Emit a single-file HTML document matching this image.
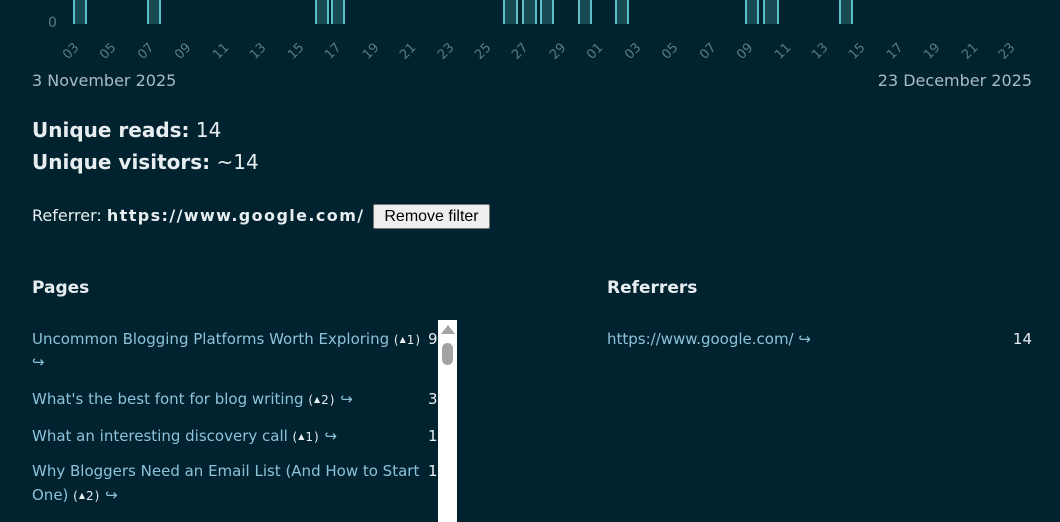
<!DOCTYPE html>
<html><head><meta charset="utf-8"><style>
body{margin:0;width:1060px;height:522px;overflow:hidden;background:#01222f;font-family:"DejaVu Sans","Liberation Sans",sans-serif;color:#e8eef0;position:relative}
.a{position:absolute;white-space:nowrap}
.bar{position:absolute;top:-2px;height:26px;background:#1a4b55;border-left:2px solid #5cc0c6;border-right:2px solid #5cc0c6;box-sizing:border-box}
.xl{position:absolute;top:44px;font-size:13px;color:#5d7a84;transform:rotate(-45deg);transform-origin:center}
.lk{color:#8cc3da}
.s{font-size:12px;color:#e8eef0;letter-spacing:1px}
.s i{font-style:normal;font-size:8px;vertical-align:2px}
.f{font-size:15px}
</style></head><body>
<div class="a" style="left:48px;top:15px;font-size:14px;color:#5d7a84">0</div>
<div class="bar" style="left:73px;width:14px"></div>
<div class="bar" style="left:147px;width:14px"></div>
<div class="bar" style="left:315px;width:14px"></div>
<div class="bar" style="left:331px;width:14px"></div>
<div class="bar" style="left:503px;width:15px"></div>
<div class="bar" style="left:522px;width:15px"></div>
<div class="bar" style="left:540px;width:14px"></div>
<div class="bar" style="left:578px;width:14px"></div>
<div class="bar" style="left:615px;width:14px"></div>
<div class="bar" style="left:745px;width:14px"></div>
<div class="bar" style="left:763px;width:16px"></div>
<div class="bar" style="left:839px;width:14px"></div>
<div id="xl"></div>
<script>
var l=["03","05","07","09","11","13","15","17","19","21","23","25","27","29","01","03","05","07","09","11","13","15","17","19","21","23"],h="";
for(var i=0;i<l.length;i++){h+='<div class="xl" style="left:'+(63+i*37.45)+'px">'+l[i]+'</div>';}
document.getElementById('xl').innerHTML=h;
</script>
<div class="a" style="left:32px;top:71px;font-size:16px;color:#a9bcc3">3 November 2025</div>
<div class="a" style="right:28px;top:71px;font-size:16px;color:#a9bcc3">23 December 2025</div>
<div class="a" style="left:32px;top:118px;font-size:20px"><b>Unique reads:</b> 14</div>
<div class="a" style="left:32px;top:150px;font-size:20px"><b>Unique visitors:</b> ~14</div>
<div class="a" style="left:32px;top:206px;font-size:16px">Referrer: <b style="letter-spacing:1.4px">https://www.google.com/</b></div>
<div class="a" style="left:373px;top:204px;width:117px;height:25px;background:#efefef;border:1px solid #767676;border-radius:2px;box-sizing:border-box;color:#000;font-family:'Liberation Sans',sans-serif;font-size:16px;text-align:center;line-height:23px">Remove filter</div>
<div class="a" style="left:32px;top:278px;font-size:17px;font-weight:bold">Pages</div>
<div class="a" style="left:607px;top:278px;font-size:17px;font-weight:bold">Referrers</div>
<div class="a f lk" style="left:32px;top:330px">Uncommon Blogging Platforms Worth Exploring <span class="s">(<i>▲</i>1)</span></div>
<div class="a f" style="left:428px;top:330px">9</div>
<div class="a f lk" style="left:32px;top:353px">↪</div>
<div class="a f lk" style="left:32px;top:390px">What's the best font for blog writing <span class="s">(<i>▲</i>2)</span> ↪</div>
<div class="a f" style="left:428px;top:390px">3</div>
<div class="a f lk" style="left:32px;top:427px">What an interesting discovery call <span class="s">(<i>▲</i>1)</span> ↪</div>
<div class="a f" style="left:428px;top:427px">1</div>
<div class="a f lk" style="left:32px;top:462px">Why Bloggers Need an Email List (And How to Start</div>
<div class="a f" style="left:428px;top:462px">1</div>
<div class="a f lk" style="left:32px;top:486px">One) <span class="s">(<i>▲</i>2)</span> ↪</div>
<div class="a" style="left:438px;top:320px;width:19px;height:202px;background:#fff"></div>
<div class="a" style="left:441px;top:325px;width:0;height:0;border-left:7px solid transparent;border-right:7px solid transparent;border-bottom:9px solid #a3a3a3"></div>
<div class="a" style="left:442px;top:343px;width:11px;height:22px;background:#a3a3a3;border-radius:6px"></div>
<div class="a f lk" style="left:607px;top:330px">https://www.google.com/ ↪</div>
<div class="a f" style="right:28px;top:330px">14</div>
</body></html>
